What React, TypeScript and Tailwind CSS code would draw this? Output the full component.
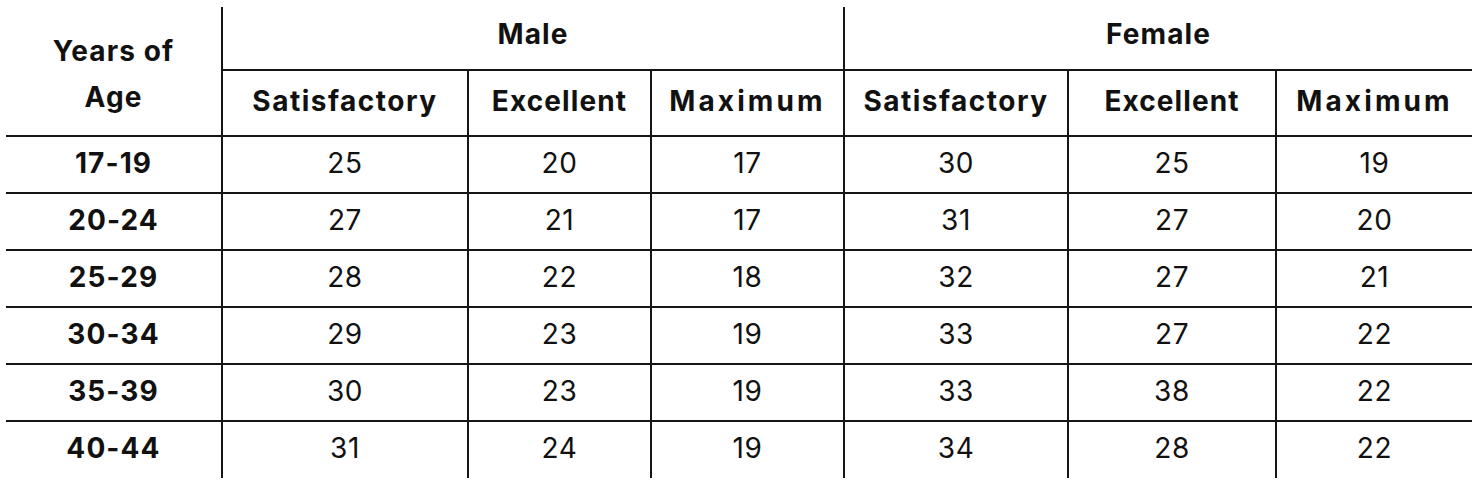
import React from "react";

const rows: [string, number[]][] = [
  ["17-19", [25, 20, 17, 30, 25, 19]],
  ["20-24", [27, 21, 17, 31, 27, 20]],
  ["25-29", [28, 22, 18, 32, 27, 21]],
  ["30-34", [29, 23, 19, 33, 27, 22]],
  ["35-39", [30, 23, 19, 33, 38, 22]],
  ["40-44", [31, 24, 19, 34, 28, 22]],
];

const sub: [string, string][] = [
  ["Satisfactory", "tracking-[1.5px]"],
  ["Excellent", "tracking-[1.1px]"],
  ["Maximum", "tracking-[3.1px]"],
  ["Satisfactory", "tracking-[1.5px]"],
  ["Excellent", "tracking-[1.1px]"],
  ["Maximum", "tracking-[3.1px]"],
];

export default function App() {
  return (
    <div className="w-[1480px] h-[486px] bg-white overflow-hidden pl-[6px] pt-[7px] text-[#111]" style={{ fontFamily: "Inter, 'Noto Sans', sans-serif" }}>
      <table className="w-[1466px] table-fixed border-collapse border-hidden">
        <colgroup>
          <col className="w-[216px]" />
          <col className="w-[246px]" />
          <col className="w-[183px]" />
          <col className="w-[193px]" />
          <col className="w-[224px]" />
          <col className="w-[208px]" />
          <col className="w-[196px]" />
        </colgroup>
        <thead>
          <tr className="h-[63px]">
            <th rowSpan={2} className="border-2 border-[#151515] text-[28px] font-bold leading-[46px] tracking-[1.1px] text-center align-middle pt-[6px]">
              Years of
              <br />
              Age
            </th>
            <th colSpan={3} className="border-2 border-[#151515] text-[28px] font-bold tracking-[1.1px] text-center align-middle pb-[8px]">
              Male
            </th>
            <th colSpan={3} className="border-2 border-[#151515] text-[28px] font-bold tracking-[1.1px] text-center align-middle pb-[8px]">
              Female
            </th>
          </tr>
          <tr className="h-[66px]">
            {sub.map(([s, t], i) => (
              <th key={i} className={`border-2 border-[#151515] text-[28px] font-bold text-center align-middle pb-[4px] ${t}`}>
                {s}
              </th>
            ))}
          </tr>
        </thead>
        <tbody>
          {rows.map(([age, vals], ri) => (
            <tr key={ri} className="h-[57px]">
              <td className="border-2 border-[#151515] text-[28px] font-bold tracking-[1.1px] text-center align-middle pb-[4px]">
                {age}
              </td>
              {vals.map((v, vi) => (
                <td key={vi} className="border-2 border-[#151515] text-[28px] font-normal tracking-[0.6px] text-center align-middle pb-[4px]">
                  {v}
                </td>
              ))}
            </tr>
          ))}
        </tbody>
      </table>
    </div>
  );
}
